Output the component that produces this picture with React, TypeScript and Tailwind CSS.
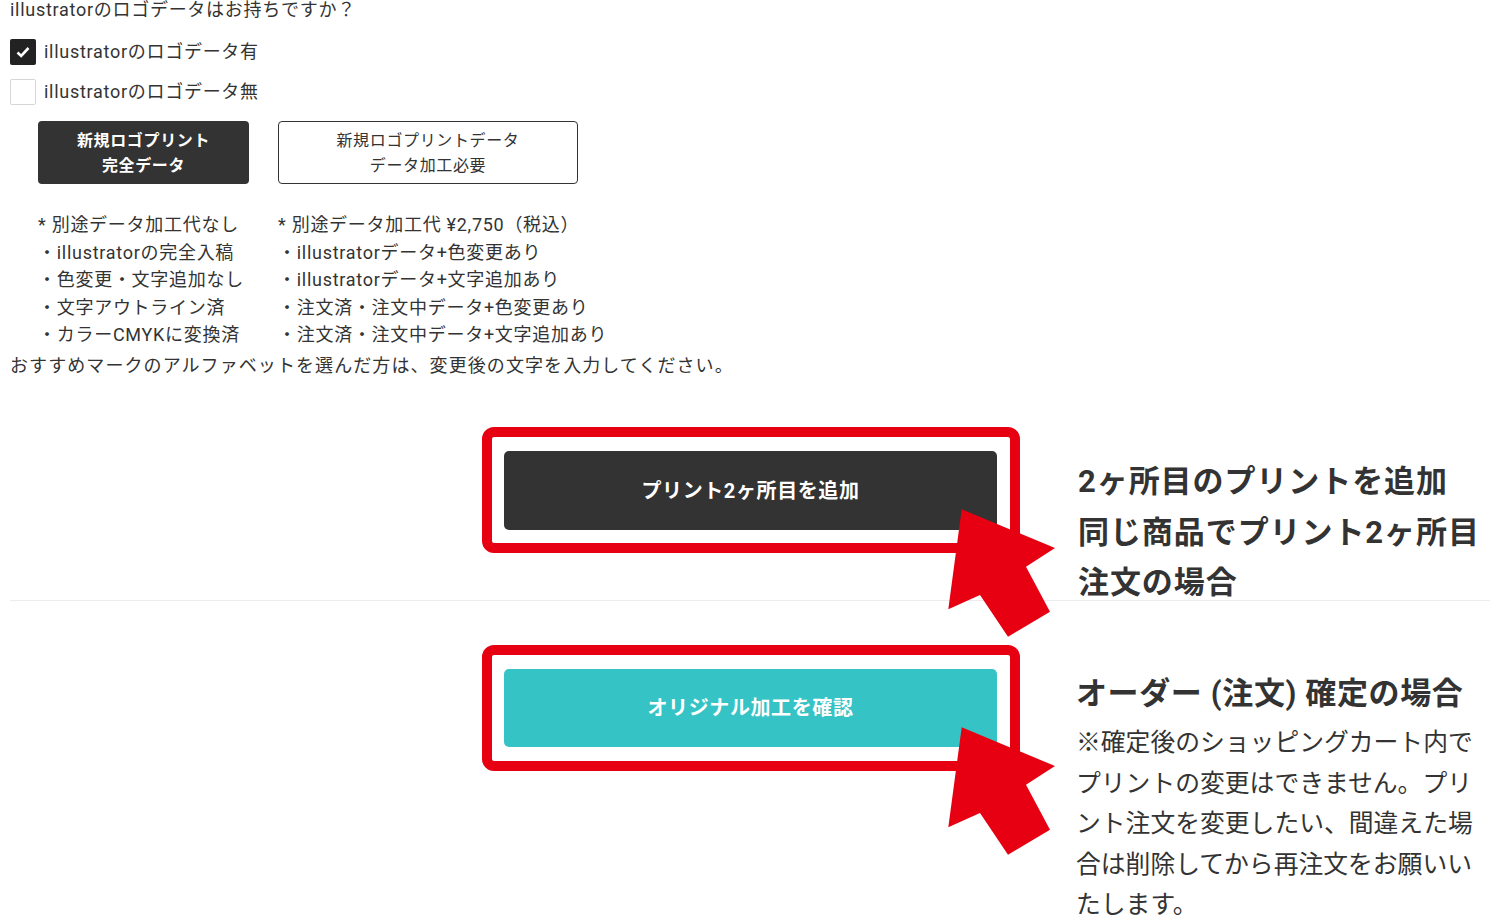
import React from "react";

const font = { fontFamily: '"Roboto", "Noto Sans CJK JP", sans-serif' };

function Arrow() {
  return (
    <svg
      className="pointer-events-none absolute left-[448px] top-[63px] z-10 overflow-visible"
      width="120"
      height="140"
      viewBox="0 0 120 140"
    >
      <polygon
        points="21.7,9.3 115,48 86,66.7 110,111.7 68,136.7 40,95 8.3,109.3"
        fill="#e60012"
      />
    </svg>
  );
}

function CheckRow({ checked, label }: { checked: boolean; label: string }) {
  return (
    <div className="flex items-center gap-[8px]">
      {checked ? (
        <span className="flex h-[26px] w-[26px] items-center justify-center rounded-[2px] bg-[#222]">
          <svg width="14" height="12" viewBox="0 0 14 12">
            <path d="M1.5 6.5 L5.2 10 L12.5 2" fill="none" stroke="#fff" strokeWidth="2.6" />
          </svg>
        </span>
      ) : (
        <span className="h-[26px] w-[26px] rounded-[2px] border border-[#d6d6d6] bg-white" />
      )}
      <span className="text-[18px] leading-[24px] tracking-[0.04em] text-[#333]">{label}</span>
    </div>
  );
}

export default function App() {
  const left = [
    "* 別途データ加工代なし",
    "・illustratorの完全入稿",
    "・色変更・文字追加なし",
    "・文字アウトライン済",
    "・カラーCMYKに変換済",
  ];
  const right = [
    "* 別途データ加工代 ¥2,750（税込）",
    "・illustratorデータ+色変更あり",
    "・illustratorデータ+文字追加あり",
    "・注文済・注文中データ+色変更あり",
    "・注文済・注文中データ+文字追加あり",
  ];

  return (
    <div className="relative h-[918px] w-[1500px] overflow-hidden bg-white text-[#333]" style={font}>
      {/* form part */}
      <div className="px-[10px]">
        <p className="text-[18px] leading-[20px] tracking-[0.04em]">illustratorのロゴデータはお持ちですか？</p>

        <div className="mt-[19px] flex flex-col gap-[14px]">
          <CheckRow checked label="illustratorのロゴデータ有" />
          <CheckRow checked={false} label="illustratorのロゴデータ無" />
        </div>

        <div className="ml-[28px] mt-[16px] flex gap-[29px]">
          <div className="flex h-[63px] w-[211px] flex-col items-center justify-center rounded-[4px] bg-[#333] text-[16px] font-bold leading-[25px] tracking-[0.04em] text-white">
            <span>新規ロゴプリント</span>
            <span>完全データ</span>
          </div>
          <div className="flex h-[63px] w-[300px] flex-col items-center justify-center rounded-[4px] border-[1.5px] border-[#333] bg-white text-[16px] leading-[25px] tracking-[0.04em] text-[#333]">
            <span>新規ロゴプリントデータ</span>
            <span>データ加工必要</span>
          </div>
        </div>

        <div className="ml-[28px] mt-[27px] flex text-[18px] leading-[27.5px] tracking-[0.04em]">
          <ul className="w-[240px]">
            {left.map((t) => (
              <li key={t}>{t}</li>
            ))}
          </ul>
          <ul>
            {right.map((t) => (
              <li key={t}>{t}</li>
            ))}
          </ul>
        </div>
        <p className="mt-[3px] text-[18px] leading-[27.5px] tracking-[0.06em]">
          おすすめマークのアルファベットを選んだ方は、変更後の文字を入力してください。
        </p>
      </div>

      {/* add second print */}
      <div className="mt-[48px] flex h-[173px] items-start">
        <div className="relative ml-[482px] w-[538px] rounded-[12px] border-[10px] border-[#e60012] pb-[13px] pl-[12px] pr-[13px] pt-[14px]">
          <div className="flex h-[79px] items-center justify-center rounded-[5px] bg-[#333] text-[20px] font-bold tracking-[0.03em] text-white">
            プリント2ヶ所目を追加
          </div>
          <Arrow />
        </div>
        <div className="ml-[58px] mt-[30px] text-[31px] font-bold leading-[50.5px] tracking-[0.03em] text-[#333]">
          <p>2ヶ所目のプリントを追加</p>
          <p>同じ商品でプリント2ヶ所目</p>
          <p>注文の場合</p>
        </div>
      </div>

      <div className="mx-[10px] border-t border-[#ececec]" />

      {/* confirm order */}
      <div className="mt-[44px] flex items-start">
        <div className="relative ml-[482px] w-[538px] rounded-[12px] border-[10px] border-[#e60012] pb-[14px] pl-[12px] pr-[13px] pt-[14px]">
          <div className="flex h-[78px] items-center justify-center rounded-[5px] bg-[#36c3c5] text-[20px] font-bold tracking-[0.03em] text-white">
            オリジナル加工を確認
          </div>
          <Arrow />
        </div>
        <div className="ml-[56px] mt-[24px] text-[#333]">
          <p className="text-[31px] font-bold leading-[50px] tracking-[0.02em]">オーダー (注文) 確定の場合</p>
          <p className="mt-[4px] text-[24.8px] leading-[40.5px]">
            ※確定後のショッピングカート内で
            <br />
            プリントの変更はできません。プリ
            <br />
            ント注文を変更したい、間違えた場
            <br />
            合は削除してから再注文をお願いい
            <br />
            たします。
          </p>
        </div>
      </div>
    </div>
  );
}
